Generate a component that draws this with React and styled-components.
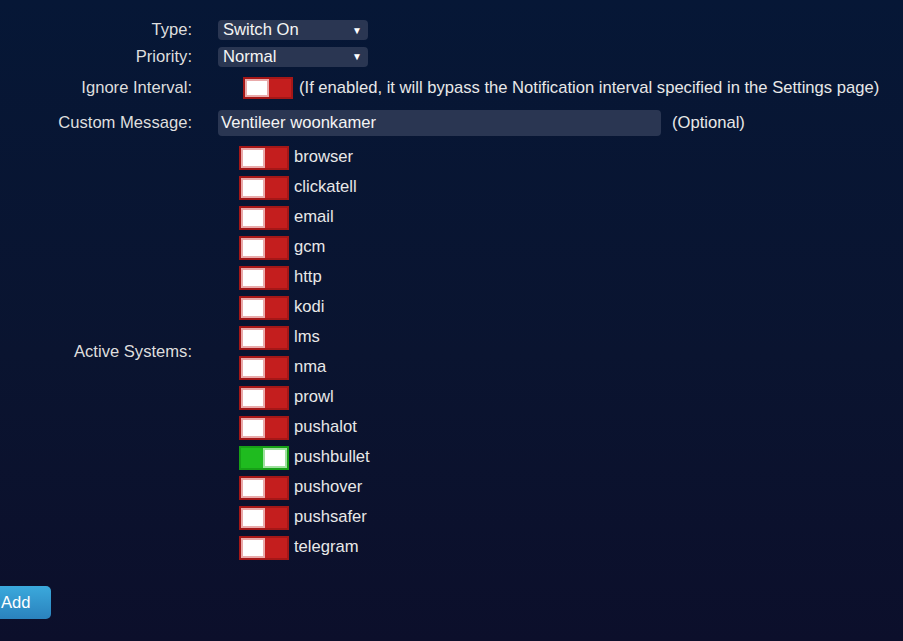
import React from "react";
import styled, { createGlobalStyle } from "styled-components";

const Global = createGlobalStyle`
  html, body { margin: 0; padding: 0; }
  body {
    min-height: 641px;
    background: linear-gradient(180deg, #061736 0%, #0a1430 55%, #0c0f2b 100%);
    font-family: "Liberation Sans", Arial, sans-serif;
    font-size: 16.6px;
    color: #e8e8e8;
  }
`;

const Page = styled.div`
  padding-top: 17px;
  min-height: 624px;
`;

const Form = styled.div`
  display: grid;
  grid-template-columns: 192px 1fr;
  column-gap: 26px;
  align-items: center;
`;

const Label = styled.div`
  color: #dedede;
  height: ${(p) => p.$h}px;
  display: flex;
  align-items: center;
  justify-content: flex-end;
  white-space: nowrap;
`;

const Cell = styled.div`
  height: ${(p) => p.$h}px;
  display: flex;
  align-items: center;
  padding-left: ${(p) => p.$indent || 0}px;
`;

const Select = styled.div`
  width: 150px;
  height: 20px;
  box-sizing: border-box;
  background: #2a3652;
  border-radius: 4px;
  display: flex;
  align-items: center;
  justify-content: space-between;
  padding: 0 6px 0 5px;
  color: #f4f4f4;
`;

const Arrow = styled.span`
  font-size: 10px;
  color: #ffffff;
`;

const Input = styled.div`
  width: 443px;
  height: 26px;
  box-sizing: border-box;
  background: #2a3652;
  border-radius: 4px;
  display: flex;
  align-items: center;
  padding-left: 3px;
  color: #f4f4f4;
`;

const Hint = styled.span`
  margin-left: ${(p) => p.$gap}px;
  color: #e8e8e8;
  white-space: nowrap;
`;

const Track = styled.div`
  width: 50px;
  height: ${(p) => p.$h}px;
  box-sizing: border-box;
  border: 2px solid ${(p) => (p.$on ? "#17a017" : "#a51717")};
  background: ${(p) => (p.$on ? "#1fbb1f" : "#c41e1e")};
  display: flex;
  align-items: center;
  justify-content: ${(p) => (p.$on ? "flex-end" : "flex-start")};
  flex-shrink: 0;
`;

const Knob = styled.div`
  width: 24px;
  height: 100%;
  box-sizing: border-box;
  background: #ffffff;
  border: 2px solid ${(p) => (p.$on ? "#9fe09f" : "#e9aaaa")};
`;

const List = styled.div`
  padding-top: 3px;
  padding-left: 21px;
  display: flex;
  flex-direction: column;
  height: 424px;
  box-sizing: border-box;
`;

const Item = styled.div`
  height: 30px;
  display: flex;
  align-items: center;
  gap: 5px;
`;

const ItemText = styled.span`
  color: #e8e8e8;
  margin-top: -3px;
`;

const AddButton = styled.button`
  margin: 22px 0 0 -19px;
  height: 33px;
  padding: 0 20px;
  border: none;
  border-radius: 5px;
  background: linear-gradient(180deg, #3ba9dc 0%, #2a82bd 100%);
  color: #ffffff;
  font-family: "Liberation Sans", Arial, sans-serif;
  font-size: 16.6px;
  display: block;
`;

const Toggle = ({ on, h = 24 }) => (
  <Track $on={on} $h={h}>
    <Knob $on={on} />
  </Track>
);

const systems = [
  "browser", "clickatell", "email", "gcm", "http", "kodi", "lms", "nma",
  "prowl", "pushalot", "pushbullet", "pushover", "pushsafer", "telegram",
];

export default function App() {
  return (
    <>
      <Global />
      <Page>
        <Form>
          <Label $h={26}>Type:</Label>
          <Cell $h={26}>
            <Select>Switch On<Arrow>▼</Arrow></Select>
          </Cell>

          <Label $h={27}>Priority:</Label>
          <Cell $h={27}>
            <Select>Normal<Arrow>▼</Arrow></Select>
          </Cell>

          <Label $h={36}>Ignore Interval:</Label>
          <Cell $h={36} $indent={25}>
            <Toggle on={false} h={22} />
            <Hint $gap={6}>(If enabled, it will bypass the Notification interval specified in the Settings page)</Hint>
          </Cell>

          <Label $h={34}>Custom Message:</Label>
          <Cell $h={34}>
            <Input>Ventileer woonkamer</Input>
            <Hint $gap={11}>(Optional)</Hint>
          </Cell>

          <Label $h={424}>Active Systems:</Label>
          <List>
            {systems.map((s) => (
              <Item key={s}>
                <Toggle on={s === "pushbullet"} h={24} />
                <ItemText>{s}</ItemText>
              </Item>
            ))}
          </List>
        </Form>
        <AddButton>Add</AddButton>
      </Page>
    </>
  );
}
